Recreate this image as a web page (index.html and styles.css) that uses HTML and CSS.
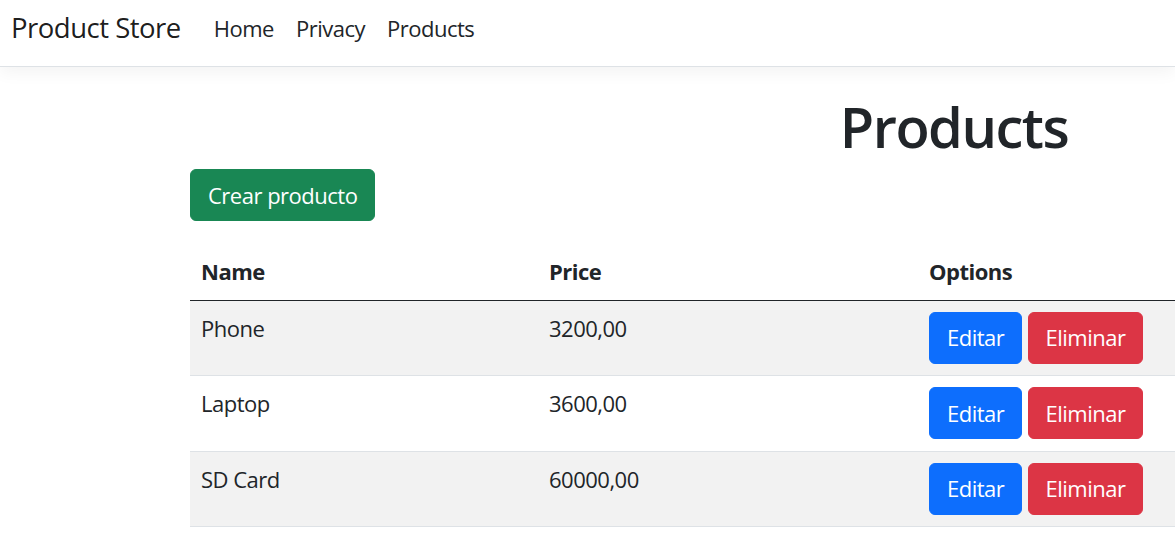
FILE: index.html
```html
<!DOCTYPE html>
<html lang="en">
<head>
<meta charset="utf-8">
<title>Products - Product Store</title>
<link rel="stylesheet" href="styles.css">
</head>
<body>
<header>
  <nav class="navbar">
    <a class="brand" href="#">Product Store</a>
    <ul class="nav-links">
      <li><a href="#">Home</a></li>
      <li><a href="#">Privacy</a></li>
      <li><a href="#">Products</a></li>
    </ul>
  </nav>
</header>
<main class="container">
  <h1 class="title">Products</h1>
  <p class="actions"><a class="btn btn-success" href="#">Crear producto</a></p>
  <table class="table">
    <thead>
      <tr>
        <th class="col-name">Name</th>
        <th class="col-price">Price</th>
        <th>Options</th>
      </tr>
    </thead>
    <tbody>
      <tr class="striped">
        <td>Phone</td>
        <td>3200,00</td>
        <td><a class="btn btn-primary" href="#">Editar</a> <a class="btn btn-danger" href="#">Eliminar</a></td>
      </tr>
      <tr>
        <td>Laptop</td>
        <td>3600,00</td>
        <td><a class="btn btn-primary" href="#">Editar</a> <a class="btn btn-danger" href="#">Eliminar</a></td>
      </tr>
      <tr class="striped">
        <td>SD Card</td>
        <td>60000,00</td>
        <td><a class="btn btn-primary" href="#">Editar</a> <a class="btn btn-danger" href="#">Eliminar</a></td>
      </tr>
    </tbody>
  </table>
</main>
</body>
</html>
```
FILE: styles.css
```css
html, body {
  margin: 0;
  padding: 0;
}

body {
  font-family: "Open Sans", "Noto Sans", "Liberation Sans", sans-serif;
  font-size: 22px;
  line-height: 1.5;
  letter-spacing: -0.5px;
  color: #212529;
  background: #fff;
  overflow-x: hidden;
}

a {
  text-decoration: none;
}

.navbar {
  display: flex;
  align-items: center;
  height: 67px;
  box-sizing: border-box;
  padding: 0 11px 10px;
  background: #fff;
  border-bottom: 1px solid #dee2e6;
  box-shadow: 0 5px 16px rgba(0, 0, 0, 0.05);
}

.brand {
  font-size: 27.5px;
  color: rgba(0, 0, 0, 0.9);
  margin-right: 22px;
}

.nav-links {
  display: flex;
  list-style: none;
  margin: 0;
  padding: 0;
}

.nav-links a {
  display: block;
  padding: 0 11px;
  color: #212529;
}

.container {
  width: 1528px;
  margin-left: 190px;
  padding-top: 26px;
}

.title {
  text-align: center;
  font-size: 56px;
  font-weight: 600;
  letter-spacing: -1.5px;
  line-height: 1.2;
  margin: 0 0 9px;
}

.actions {
  margin: 0 0 23px;
}

.btn {
  display: inline-block;
  padding: 8.5px 17px;
  border: 1px solid transparent;
  border-radius: 6px;
  color: #fff;
  font-size: 22px;
  line-height: 33px;
}

.btn-success {
  background: #198754;
  border-color: #198754;
}

.btn-primary {
  background: #0d6efd;
  border-color: #0d6efd;
}

.btn-danger {
  background: #dc3545;
  border-color: #dc3545;
}

.table {
  width: 100%;
  border-collapse: collapse;
}

.table th,
.table td {
  text-align: left;
  vertical-align: top;
  padding: 11.25px 11px;
  border-bottom: 1px solid #dee2e6;
}

.table thead th {
  font-weight: 700;
  border-bottom: 1px solid #212529;
}

.col-name {
  width: 326px;
}

.col-price {
  width: 358px;
}

.table tr.striped td {
  background: #f2f2f2;
}
```
